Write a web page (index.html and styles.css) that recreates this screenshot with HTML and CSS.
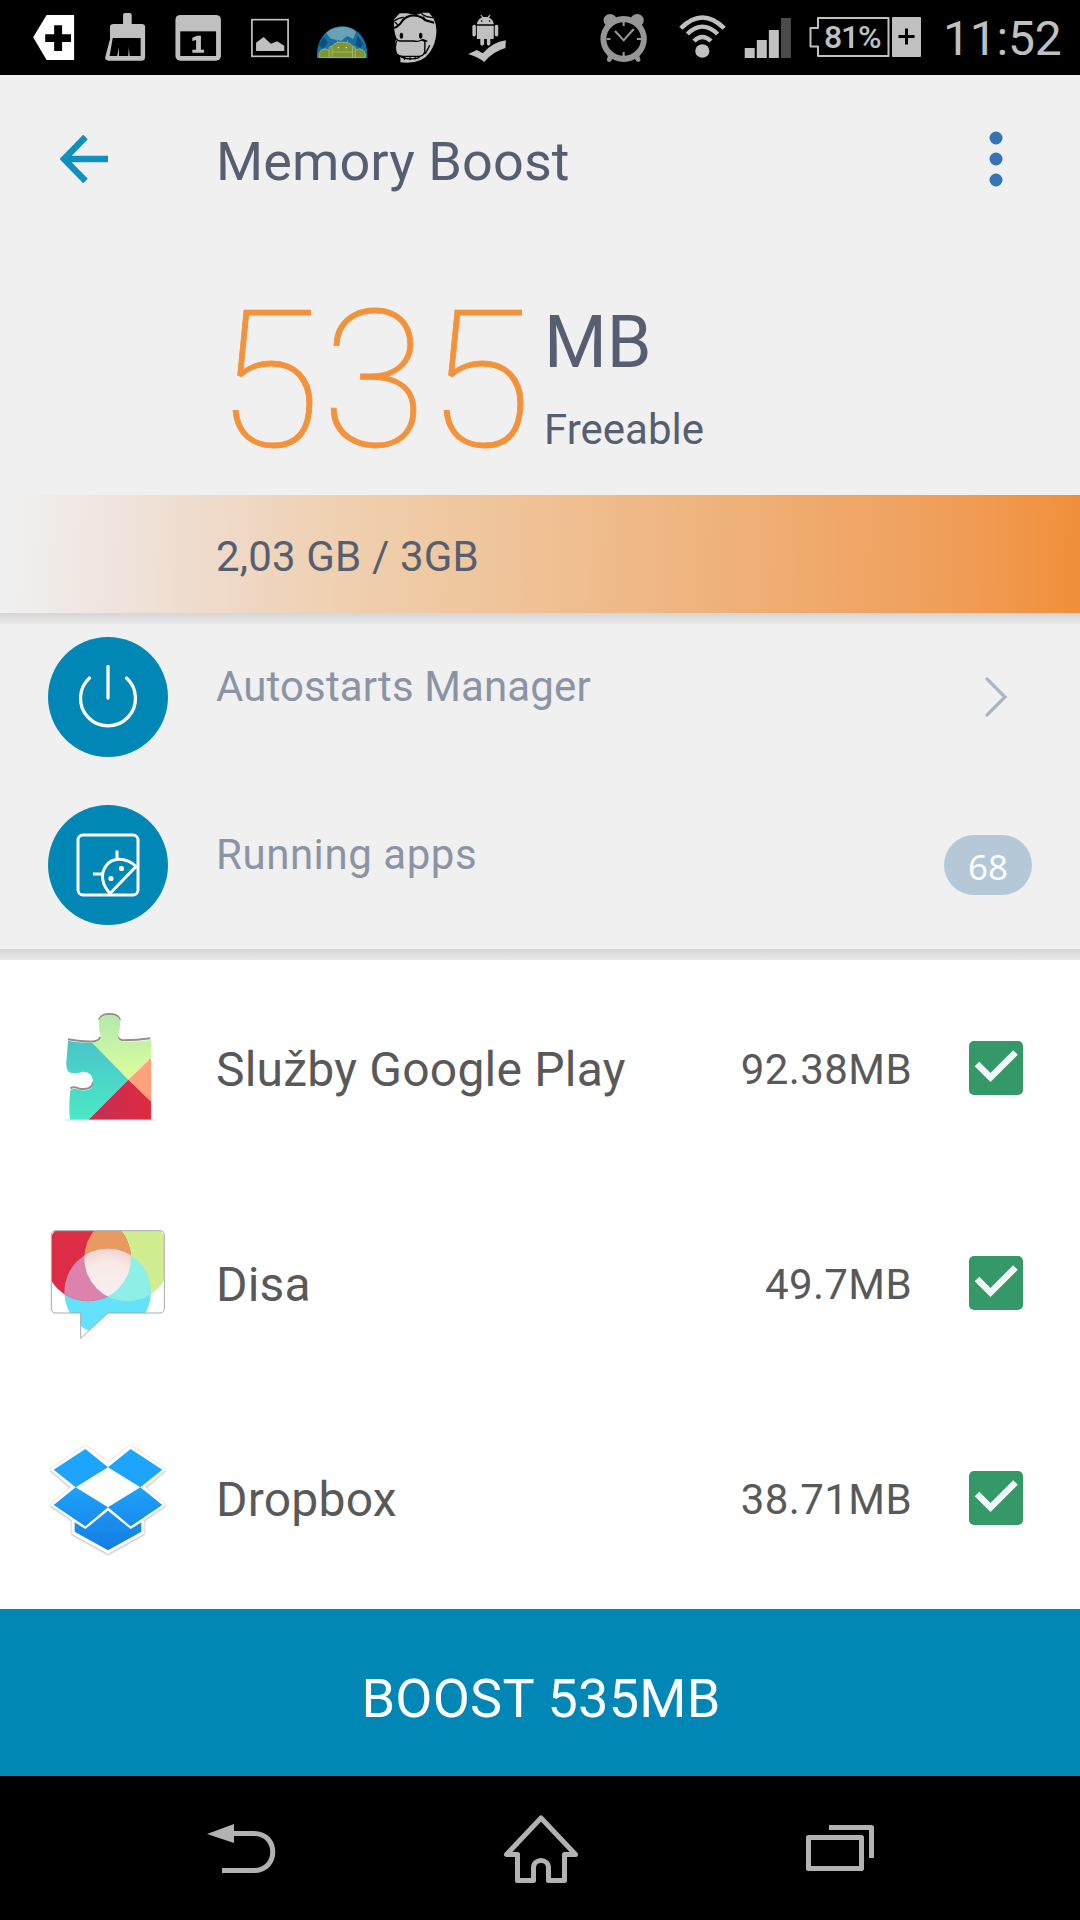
FILE: index.html
```html
<!DOCTYPE html>
<html lang="en">
<head>
    <meta charset="UTF-8">
    <meta name="viewport" content="width=device-width, initial-scale=1.0">
    <title>Memory Boost</title>
    <link rel="stylesheet" href="styles.css">
</head>
<body>
    <!-- Status bar -->
    <div class="status-bar">
        <div class="notifications">
            <svg class="slot" viewBox="52 0 209 225" preserveAspectRatio="none">
                <path fill="#fff" d="M96 112L135 45H215V180H135Z"/>
                <path d="M157 76H180V103H206V126H180V153H157V126H131V103H157Z"/>
            </svg>
            <svg class="slot" viewBox="261 0 209 225" preserveAspectRatio="none">
                <path fill="#c0c0c0" d="M357 45q0-6 6-6h13q6 0 6 6v27h29q10 0 10 10v89q0 11-10 11H316q-14 0-10-14l13-50V82q0-10 10-10h28Z"/>
                <path d="M327 114H408V168H376L374 140L372 168H345V142L340 168H318Z"/>
            </svg>
            <svg class="slot" viewBox="470 0 209 225" preserveAspectRatio="none">
                <rect x="509" y="45" width="132" height="137" rx="14" fill="#c0c0c0"/>
                <rect x="523" y="94" width="104" height="74"/>
                <path fill="#c0c0c0" d="M558 113L572 107H583V149H592V158H558V149H569V120L558 123Z"/>
            </svg>
            <svg class="slot" viewBox="679 0 209 225" preserveAspectRatio="none">
                <rect x="731" y="59" width="105" height="110" fill="none" stroke="#c0c0c0" stroke-width="5"/>
                <path fill="#c0c0c0" d="M743 153V128L765 111L786 131L804 124L825 137V153Z"/>
            </svg>
            <svg class="slot" viewBox="888 0 209 225" preserveAspectRatio="none">
                <path fill="#1670a3" d="M920 174C914 47 1072 47 1066 174Z"/>
                <path fill="#6aa2b5" d="M947 100C965 78 1014 74 1033 96L1025 117L1008 108L990 122L960 116Z"/>
                <path fill="#0a4e83" d="M924 134L940 110L951 128L937 146ZM1038 108L1054 131L1046 144L1031 134Z"/>
                <g fill="#7d9631" stroke="#b3c48a" stroke-width="2">
                    <path d="M926 173V160Q930 147 944 146Q954 147 958 159V173ZM1028 173V158Q1032 146 1044 146Q1057 149 1060 161V173Z"/>
                    <path d="M955 173V143Q957 137 963 139Q972 126 993 126Q1015 126 1024 139Q1030 138 1031 143V173Z"/>
                    <path fill="none" d="M964 156H1023M964 140V173M1023 140V173M978 121L982 129M1010 121L1006 129"/>
                </g>
                <path fill="#dbe5b0" d="M980 141h4v4h-4ZM1003 141h4v4h-4Z"/>
            </svg>
            <svg class="slot" viewBox="1097 0 209 225" preserveAspectRatio="none">
                <path fill="#c0c0c0" d="M1144 58L1160 40H1182L1207 46L1225 38H1245L1256 52C1273 78 1269 126 1248 156Q1225 194 1162 187V178Q1160 172 1164 169Q1147 166 1147 145Q1145 124 1151 116Q1141 92 1144 58Z"/>
                <g fill="none" stroke="#000" stroke-width="4">
                    <path stroke-width="6" d="M1144 84Q1158 78 1168 62Q1182 45 1206 47Q1222 48 1233 60L1260 68"/>
                    <path d="M1144 63Q1156 53 1172 52M1222 40Q1234 52 1257 53M1154 74L1146 66M1236 62L1228 50"/>
                    <path d="M1151 122Q1144 143 1151 162Q1158 169 1168 169H1218Q1233 167 1233 151V124L1224 120Q1214 126 1200 123H1160Q1152 122 1151 116M1226 118L1240 124M1234 162L1247 136M1164 171Q1194 182 1218 172"/>
                    <path d="M1174 172v8M1190 172v8M1205 170v8"/>
                </g>
                <ellipse cx="1165" cy="107" rx="5" ry="9"/><ellipse cx="1221" cy="107" rx="5" ry="9"/>
            </svg>
            <svg class="slot" viewBox="1306 0 209 225" preserveAspectRatio="none">
                <g fill="#c0c0c0">
                    <path d="M1384 73Q1386 56 1399 53L1394 45L1397 44L1402 51H1415L1421 44L1424 45L1419 53Q1432 58 1433 73Z"/>
                    <path d="M1384 77H1433V117H1423V133Q1418 141 1413 133V117H1405V133Q1399 141 1394 133V117H1384ZM1371 78q5-7 10 0v28q-5 7-10 0ZM1436 78q5-7 10 0v28q-5 7-10 0Z"/>
                    <path d="M1359 162L1384 150L1401 160Q1430 126 1468 121L1467 144Q1430 155 1405 186Q1388 171 1359 162Z"/>
                </g>
                <circle cx="1398" cy="63" r="2.5"/><circle cx="1421" cy="63" r="2.5"/>
            </svg>
        </div>
        <div class="system-icons">
            <svg class="alarm" viewBox="170 0 150 225" preserveAspectRatio="none">
                <g fill="#969696">
                    <circle cx="205" cy="61" r="19"/><circle cx="283" cy="61" r="19"/>
                    <path d="M200 164L215 172L207 184Q200 189 195 180ZM288 164L273 172L281 184Q289 189 293 180Z"/>
                    <ellipse cx="244" cy="117" rx="67" ry="69"/>
                </g>
                <circle cx="244" cy="117" r="50"/>
                <path d="M244 66V78M244 156V168M195 117H206M282 117H294M219 93L244 121L273 87" fill="none" stroke="#969696" stroke-width="6"/>
            </svg>
            <svg class="wifi" viewBox="400 0 147 225" preserveAspectRatio="none">
                <circle cx="473" cy="153" r="20.5" fill="#c0c0c0"/>
                <path d="M411 85Q473 20 536 85M430 102Q473 58 517 102M449 123Q473 99 498 123" fill="none" stroke="#c0c0c0" stroke-width="13"/>
            </svg>
            <svg class="signal" viewBox="590 0 145 225" preserveAspectRatio="none">
                <path fill="#c0c0c0" d="M595 144h29v30h-29ZM630 120h29v54h-29ZM665 90h29v84h-29Z"/>
                <path fill="#4a4a4a" d="M700 54h29v120h-29Z"/>
            </svg>
            <svg class="battery" viewBox="807 0 116 75">
                <path d="M818 18h70.500v38H818v-9.500h-7.500V28h7.500Z" fill="none" stroke="#c0c0c0" stroke-width="2" stroke-linejoin="round"/>
                <rect x="892" y="17" width="29" height="40" rx="1" fill="#c0c0c0"/>
                <path d="M898.500 36.500h16M906.500 28.500v16" stroke="#000" stroke-width="3"/>
                <text class="battery-level" x="824" y="48.300">81%</text>
            </svg>
            <span class="clock">11:52</span>
        </div>
    </div>

    <!-- Title and freeable memory -->
    <div class="app-header">
        <svg class="back-arrow" viewBox="60 135 49 49">
            <path d="M108 159H65M85.500 137L64 159L85.500 181" fill="none" stroke="#0f90bd" stroke-width="6.500"/>
        </svg>
        <h1 class="title">Memory Boost</h1>
        <svg class="menu-dots" viewBox="0 0 14 56">
            <g fill="#3573b3"><circle cx="7" cy="7" r="6.500"/><circle cx="7" cy="28" r="6.500"/><circle cx="7" cy="49" r="6.500"/></g>
        </svg>
    </div>
    <div class="summary">
        <span class="amount">535</span>
        <div class="amount-info">
            <span class="unit">MB</span>
            <span class="label">Freeable</span>
        </div>
    </div>
    <div class="usage-bar"><span>2,03 GB / 3GB</span></div>

    <!-- Shortcuts -->
    <div class="shortcuts">
        <div class="shortcut">
            <svg class="round-icon" viewBox="0 0 120 120">
                <circle cx="60" cy="60" r="60" fill="#0087b5"/>
                <path d="M60 29.500V61M41.500 41A27.500 27.500 0 1 0 78.500 41" fill="none" stroke="#fff" stroke-width="3.300" stroke-linecap="round"/>
            </svg>
            <span class="shortcut-name">Autostarts Manager</span>
            <svg class="chevron" viewBox="0 0 24 42">
                <path d="M3 3L21 21L3 39" fill="none" stroke="#adb5c1" stroke-width="3.200" stroke-linecap="round"/>
            </svg>
        </div>
        <div class="shortcut">
            <svg class="round-icon" viewBox="0 0 120 120">
                <circle cx="60" cy="60" r="60" fill="#0087b5"/>
                <g fill="none" stroke="#fff" stroke-width="3">
                    <rect x="30" y="30" width="60" height="60" rx="5"/>
                    <path d="M62 88.500L88 61.500C78 52 64 52 58 61C52 69 54 80 62 88.500ZM69 55V45.500M55 69H45"/>
                </g>
                <circle cx="73.500" cy="63.500" r="2.600" fill="#fff"/><circle cx="63" cy="73.500" r="2.600" fill="#fff"/>
            </svg>
            <span class="shortcut-name running">Running apps</span>
            <span class="badge">68</span>
        </div>
    </div>

    <!-- App list -->
    <div class="app-list">
        <div class="app">
            <svg class="app-icon" viewBox="52 51 360 360">
                <defs>
                    <linearGradient id="teal" x1="0" y1="0" x2="0" y2="1"><stop offset="0" stop-color="#4bc3c9"/><stop offset="1" stop-color="#4ae9c6"/></linearGradient>
                    <linearGradient id="lime" x1="0" y1="0" x2="0" y2="1"><stop offset="0" stop-color="#b0e8ae"/><stop offset="1" stop-color="#dcff9c"/></linearGradient>
                    <linearGradient id="crimson"><stop offset="0" stop-color="#bf3058"/><stop offset="1" stop-color="#e12a3f"/></linearGradient>
                    <clipPath id="puzzle"><path d="M112 149Q148 157 190 154Q211 151 211 137Q202 110 205 88Q210 72 236 72Q264 72 268 88Q270 115 262 137Q264 150 280 152Q320 153 361 147V386H118Q113 350 119 298Q128 289 146 297Q184 304 187 277Q190 243 156 242Q127 251 115 243Q104 235 108 200Z"/></clipPath>
                </defs>
                <path d="M104 387H374" stroke="#999" stroke-width="3" opacity=".4"/>
                <path d="M112 145Q148 153 190 151Q208 147 208 137M205 88Q210 69 236 69Q264 69 268 88M262 137Q265 147 280 148Q320 148 359 142M119 292Q130 285 146 293Q184 299 188 272" fill="none" stroke="#978f84" stroke-width="6"/>
                <g clip-path="url(#puzzle)">
                    <path fill="url(#teal)" d="M100 140H185L293 266L170 390H100Z"/>
                    <path fill="url(#lime)" d="M165 60H365V199L293 266L168 139Z"/>
                    <path fill="#ffa27b" d="M293 266L365 197V335Z"/>
                    <path fill="url(#crimson)" d="M293 266L365 335V390H170Z"/>
                </g>
            </svg>
            <span class="app-name">Služby Google Play</span>
            <span class="app-size">92.38MB</span>
            <svg class="checkbox" viewBox="0 0 54 54"><rect width="54" height="54" rx="5" fill="#359869"/><path d="M8 23L21.500 36.500L46.500 11.500" fill="none" stroke="#f5f7f6" stroke-width="6.500"/></svg>
        </div>
        <div class="app">
            <svg class="app-icon" viewBox="54 39 360 360">
                <defs>
                    <clipPath id="bubble"><path id="bubble-shape" d="M78 62H389Q403 62 403 76V294Q403 309 389 309H234L152 385V309H78Q64 309 64 294V76Q64 62 78 62Z"/></clipPath>
                    <clipPath id="red-circle"><circle cx="174" cy="145" r="129"/></clipPath>
                    <clipPath id="green-circle"><circle cx="292" cy="144" r="129"/></clipPath>
                    <radialGradient id="center"><stop offset="0" stop-color="#f6f0ef"/><stop offset=".7" stop-color="#f8e9e7"/><stop offset="1" stop-color="#f2d4cf"/></radialGradient>
                </defs>
                <use href="#bubble-shape" fill="#fff"/>
                <g clip-path="url(#bubble)">
                    <circle cx="233" cy="246" r="130" fill="#65e2fb"/>
                    <circle cx="292" cy="144" r="129" fill="#d0ed91"/>
                    <circle cx="174" cy="145" r="129" fill="#dd2c45"/>
                    <g clip-path="url(#red-circle)">
                        <circle cx="292" cy="144" r="129" fill="#e99a63"/>
                        <circle cx="233" cy="246" r="130" fill="#db82ad"/>
                    </g>
                    <g clip-path="url(#green-circle)">
                        <circle cx="233" cy="246" r="130" fill="#8eeee8"/>
                        <g clip-path="url(#red-circle)"><circle cx="233" cy="246" r="130" fill="url(#center)"/></g>
                    </g>
                </g>
                <use href="#bubble-shape" fill="none" stroke="#aaa" stroke-width="3"/>
            </svg>
            <span class="app-name">Disa</span>
            <span class="app-size">49.7MB</span>
            <svg class="checkbox" viewBox="0 0 54 54"><rect width="54" height="54" rx="5" fill="#359869"/><path d="M8 23L21.500 36.500L46.500 11.500" fill="none" stroke="#f5f7f6" stroke-width="6.500"/></svg>
        </div>
        <div class="app">
            <svg class="app-icon" viewBox="54 24 360 360">
                <defs>
                    <linearGradient id="box" gradientUnits="userSpaceOnUse" x1="0" y1="55" x2="0" y2="360"><stop offset="0" stop-color="#1ca6ff"/><stop offset=".35" stop-color="#1fa3fb"/><stop offset="1" stop-color="#137de4"/></linearGradient>
                </defs>
                <path class="box-edge" d="M166 46L234 97L302 46L408 119L346 172L408 225L343 270V311L234 372L125 311V270L60 225L122 172L60 119Z"/>
                <path fill="url(#box)" d="M166 57L234 112L137 172L71 119ZM302 57L234 112L331 172L397 119ZM137 172L234 232L166 289L71 225ZM331 172L234 232L302 289L397 225ZM234 242L302 297L334 277V305L234 361L134 305V277L166 297Z"/>
            </svg>
            <span class="app-name">Dropbox</span>
            <span class="app-size">38.71MB</span>
            <svg class="checkbox" viewBox="0 0 54 54"><rect width="54" height="54" rx="5" fill="#359869"/><path d="M8 23L21.500 36.500L46.500 11.500" fill="none" stroke="#f5f7f6" stroke-width="6.500"/></svg>
        </div>
    </div>

    <div class="boost-button">BOOST 535MB</div>

    <!-- Navigation bar -->
    <div class="nav-bar">
        <svg viewBox="196 1776 90 144">
            <path d="M207 1834L234 1824V1843Z" fill="#b2b2b2"/>
            <path d="M232 1833.500H254C279 1833.500 279 1870.500 254 1870.500H222" fill="none" stroke="#b2b2b2" stroke-width="5"/>
        </svg>
        <svg viewBox="495 1776 90 144">
            <path d="M540 1818L505.500 1854.500H516.500V1880.500H532.500V1868C532.500 1858 547.500 1858 547.500 1868V1880.500H563.500V1854.500H574.500Z" fill="none" stroke="#b2b2b2" stroke-width="5" stroke-linejoin="round"/>
        </svg>
        <svg viewBox="795 1776 90 144">
            <path d="M808.500 1837.500H861.500V1868.500H808.500ZM829 1827.500H871.500V1858" fill="none" stroke="#b2b2b2" stroke-width="5" stroke-linejoin="round"/>
        </svg>
    </div>
</body>
</html>
```
FILE: styles.css
```css
* {
    box-sizing: border-box;
}

body {
    margin: 0;
    width: 1080px;
    height: 1920px;
    overflow: hidden;
    display: flex;
    flex-direction: column;
    background-color: #f0f0f0;
    color: #565f71;
    font-family: Roboto, "Noto Sans", sans-serif;
}

svg {
    display: block;
    flex: none;
}

/* Status bar */
.status-bar {
    height: 75px;
    flex: none;
    display: flex;
    justify-content: space-between;
    background-color: #000;
    padding: 0 18px;
}

.notifications,
.system-icons {
    display: flex;
}

.slot {
    width: 72px;
    height: 75px;
}

.alarm {
    width: 52px;
    height: 75px;
    margin-right: 27px;
}

.wifi {
    width: 51px;
    height: 75px;
    margin-right: 15px;
}

.signal {
    width: 50px;
    height: 75px;
    margin-right: 14px;
}

.battery {
    width: 116px;
    height: 75px;
}

.battery-level {
    fill: #c0c0c0;
    font-size: 32px;
    font-weight: 500;
    letter-spacing: -1.2px;
}

.clock {
    width: 119px;
    margin-left: 20px;
    color: #c0c0c0;
    font-size: 48px;
    line-height: 78px;
    letter-spacing: -0.2px;
    white-space: nowrap;
}

/* Header */
.app-header {
    height: 168px;
    flex: none;
    display: flex;
    align-items: center;
    padding: 0 77px 0 60px;
}

.back-arrow {
    width: 49px;
    height: 49px;
}

.title {
    flex: 1;
    margin: 0 0 0 107px;
    padding-top: 4px;
    font-size: 54px;
    font-weight: 400;
    letter-spacing: 0.1px;
}

.menu-dots {
    width: 14px;
    height: 56px;
}

.summary {
    height: 252px;
    flex: none;
    display: flex;
    padding: 0 0 0 216px;
}

.amount {
    width: 328px;
    color: #f3923b;
    font-size: 192px;
    font-weight: 100;
    letter-spacing: 0.4px;
    line-height: 276px;
    -webkit-text-stroke: 0.8px #f3923b;
}

.amount-info {
    display: flex;
    flex-direction: column;
    padding-top: 58px;
}

.unit {
    font-size: 72px;
    line-height: 84px;
}

.label {
    font-size: 42px;
    line-height: 50px;
    margin-top: 20px;
}

.usage-bar {
    height: 118px;
    flex: none;
    padding: 5px 0 0 216px;
    background: linear-gradient(92deg, #f0f0f0 1%, #f0e6e0 9%, #efd8c5 22%, #efceac 34%, #efc296 49%, #efb27c 66%, #f09e59 88%, #f0903c 99%);
    font-size: 42px;
    letter-spacing: 0.15px;
    line-height: 113px;
}

/* Shortcuts */
.shortcuts,
.app-list {
    flex: none;
    background-image: linear-gradient(#d6d6d6, #e8e8e8);
    background-size: 100% 11px;
    background-repeat: no-repeat;
}

.shortcut {
    height: 168px;
    display: flex;
    align-items: center;
    padding: 0 48px;
}

.round-icon,
.app-icon {
    width: 120px;
    height: 120px;
    margin-right: 48px;
}

.shortcut-name {
    flex: 1;
    padding-bottom: 21px;
    color: #8b94a5;
    font-size: 42px;
    letter-spacing: 0.12px;
}

.running {
    letter-spacing: 0.55px;
}

.chevron {
    width: 24px;
    height: 42px;
    margin-right: 24px;
}

.badge {
    width: 88px;
    height: 60px;
    border-radius: 30px;
    background-color: #b4c8d8;
    color: #fafcfc;
    font-family: "Noto Sans", sans-serif;
    font-size: 35px;
    line-height: 63px;
    text-align: center;
}

/* App list */
.app-list {
    height: 660px;
    overflow: hidden;
    background-color: #fff;
    padding-top: 11px;
}

.app {
    height: 215px;
    display: flex;
    align-items: center;
    padding: 0 57px 0 48px;
    color: #595959;
}

.app-name {
    flex: 1;
    padding-top: 4px;
    font-size: 48px;
    letter-spacing: 0.22px;
}

.app-size {
    padding-top: 4px;
    margin-right: 57px;
    font-size: 42px;
    letter-spacing: 0.4px;
}

.checkbox {
    width: 54px;
    height: 54px;
}

.box-edge {
    fill: #fff;
    filter: drop-shadow(0 2px 3px rgba(0, 0, 0, 0.35));
}

.boost-button {
    height: 167px;
    flex: none;
    padding: 12px 0 0 2px;
    background-color: #0087b5;
    color: #fff;
    font-size: 54px;
    letter-spacing: 0.25px;
    line-height: 155px;
    text-align: center;
}

/* Navigation bar */
.nav-bar {
    height: 144px;
    flex: none;
    display: flex;
    justify-content: space-between;
    padding: 0 195px 0 196px;
    background-color: #000;
}

.nav-bar svg {
    width: 90px;
    height: 144px;
}
```
